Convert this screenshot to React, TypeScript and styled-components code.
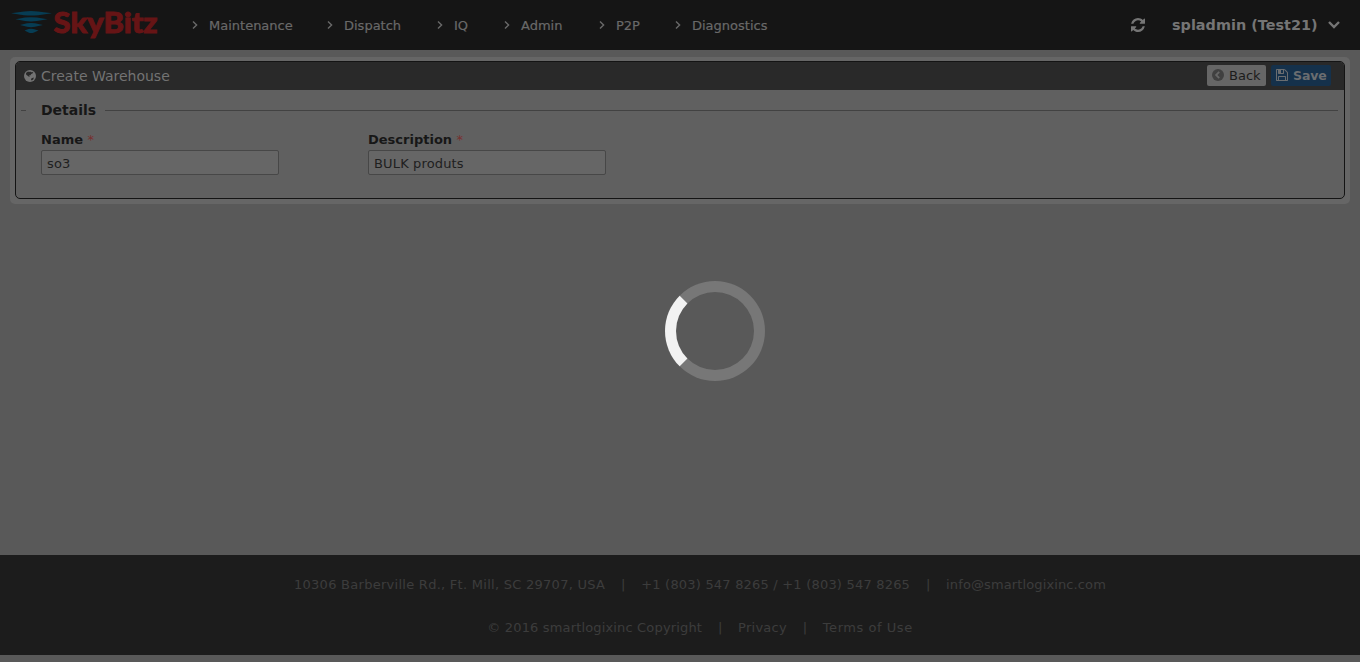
import React from "react";
import styled, { createGlobalStyle } from "styled-components";

const Global = createGlobalStyle`
  * { box-sizing: border-box; }
  body { margin: 0; background: #595959; font-family: Verdana, "DejaVu Sans", sans-serif; font-size: 13px; overflow: hidden; }
`;

const Page = styled.div`
  height: 662px;
  display: flex;
  flex-direction: column;
  background: #595959;
`;

const TopBar = styled.header`
  height: 50px;
  flex: none;
  display: flex;
  align-items: center;
  background: #151515;
  color: #696969;
`;

const LogoBox = styled.a`
  width: 192px;
  height: 50px;
  flex: none;
  svg { display: block; }
`;

const Nav = styled.nav`
  display: flex;
  flex: 1;
`;

const NavItem = styled.a<{ $w: number }>`
  width: ${(p) => p.$w}px;
  display: flex;
  align-items: center;
  height: 50px;
  gap: 11px;
  white-space: nowrap;
  -webkit-text-stroke: 0.2px #696969;
  svg { flex: none; }
`;

const NavText = styled.span`
  line-height: 16px;
  padding-top: 2px;
`;

const Tools = styled.div`
  display: flex;
  align-items: center;
  padding-right: 20px;
  color: #757575;
`;

const UserName = styled.span`
  margin: 0 10px 0 27px;
  width: 146px;
  white-space: nowrap;
  font-size: 14.4px;
  font-weight: bold;
  letter-spacing: 0.02px;
`;

const Main = styled.main`
  flex: 1;
  padding: 7px 10px;
`;

const Frame = styled.section`
  height: 147px;
  padding: 4px 5px 5px;
  border-radius: 5px;
  background: #666;
`;

const Panel = styled.div`
  height: 138px;
  border: 1px solid #141414;
  border-radius: 5px;
  background: #606060;
  overflow: hidden;
`;

const PanelHead = styled.div`
  height: 28px;
  display: flex;
  align-items: center;
  justify-content: space-between;
  padding: 0 13px 0 8px;
  background: #292929;
  color: #737373;
`;

const PanelTitle = styled.h1`
  margin: 0;
  display: flex;
  align-items: center;
  gap: 5px;
  font-size: 14px;
  font-weight: normal;
  letter-spacing: 0;
`;

const Actions = styled.div`
  display: flex;
  gap: 5px;
  padding-bottom: 2px;
`;

const Button = styled.button<{ $primary?: boolean }>`
  height: 21px;
  width: ${(p) => (p.$primary ? 60 : 59)}px;
  display: flex;
  align-items: center;
  gap: 5px;
  padding: 0 0 0 5px;
  border: 0;
  border-radius: 2px;
  font: ${(p) => (p.$primary ? "bold 12.5px" : "13px")} Verdana, "DejaVu Sans", sans-serif;
  background: ${(p) => (p.$primary ? "#15314b" : "#666")};
  color: ${(p) => (p.$primary ? "#6a6d70" : "#1c1c1c")};
  letter-spacing: ${(p) => (p.$primary ? "-0.1px" : "0")};
  svg { flex: none; }
`;

const Legend = styled.div`
  height: 40px;
  display: flex;
  align-items: center;
  padding: 0 6px 0 5px;
  color: #171717;
`;

const Rule = styled.i<{ $w?: number }>`
  height: 1px;
  ${(p) => (p.$w ? `width: ${p.$w}px;` : "flex: 1;")}
  background: #424242;
`;

const LegendText = styled.b`
  width: 64px;
  margin-left: 15px;
  font-size: 14px;
`;

const Fields = styled.div`
  display: flex;
  padding-left: 25px;
  gap: 89px;
`;

const Field = styled.label`
  width: 238px;
  display: block;
`;

const Label = styled.span`
  display: block;
  height: 20px;
  line-height: 20px;
  font-weight: bold;
  color: #171717;
  white-space: nowrap;
`;

const Required = styled.span`
  color: #792f2f;
  font-weight: normal;
`;

const Input = styled.input`
  display: block;
  width: 238px;
  height: 25px;
  padding: 2px 5px 0;
  border: 1px solid #474747;
  border-radius: 2px;
  outline: 0;
  background: #666;
  color: #202020;
  font: 13px Verdana, "DejaVu Sans", sans-serif;
  letter-spacing: 0.15px;
`;

const Footer = styled.footer`
  height: 100px;
  flex: none;
  margin-bottom: 7px;
  padding: 8px 0 0 40px;
  background: #1c1c1c;
  color: #3c3c3c;
`;

const FooterLine = styled.div`
  height: 43px;
  display: flex;
  align-items: center;
  justify-content: center;
  white-space: nowrap;
`;

const FooterText = styled.span<{ $spacing: number }>`
  letter-spacing: ${(p) => p.$spacing}px;
`;

const Bar = styled.span`
  width: 36px;
  text-align: center;
`;

const Loader = styled.div`
  position: fixed;
  top: 281px;
  left: 665px;
  width: 100px;
  height: 100px;
  border: 11px solid #777;
  border-left-color: #f2f2f2;
  border-radius: 50%;
`;

const Chevron = () => (
  <svg width="6" height="8" viewBox="0 0 6 8" fill="none" stroke="#696969" strokeWidth="1.4">
    <path d="M1 0.5 4.6 4 1 7.5" />
  </svg>
);

const Logo = () => (
  <svg width="170" height="50" viewBox="0 0 170 50">
    <g fill="#073d54">
      <path d="M11 13.2 24 11.5Q31 10.7 38 11.5L52 13.2 38 15.2Q31 16 24 15.2Z" />
      <path d="M15.5 19.2 25 17.5Q31 16.9 37 17.5L47.5 19.2 37 21Q31 21.8 25 21Z" />
      <path d="M20 24.9 27 23.2Q31 22.6 35 23.2L43 24.9 35 26.8Q31 27.5 27 26.8Z" />
      <path d="M24.5 30.4 28.5 28.9Q31 28.4 33.5 28.9L38.5 30.4 34 32.4Q31 33.6 28.5 32.4Z" />
    </g>
    <text x="53.6" y="32.7" textLength="104" lengthAdjust="spacingAndGlyphs" fontFamily="Lato, sans-serif" fontWeight="900" fontSize="29" fill="#661415" stroke="#661415" strokeWidth="0.9">SkyBitz</text>
  </svg>
);

const Refresh = () => (
  <svg width="14" height="14" viewBox="0 128 1536 1536" fill="currentColor">
    <path d="M1511 1056q0 5-1 7-64 268-268 434.5t-478 166.5q-146 0-282.5-55t-243.5-157l-129 129q-19 19-45 19t-45-19-19-45v-448q0-26 19-45t45-19h448q26 0 45 19t19 45-19 45l-137 137q71 66 161 102t187 36q134 0 250-65t186-179q11-17 53-117 8-23 30-23h192q13 0 22.5 9.5t9.5 22.5zm25-800v448q0 26-19 45t-45 19h-448q-26 0-45-19t-19-45 19-45l138-138q-148-137-349-137-134 0-250 65t-186 179q-11 17-53 117-8 23-30 23h-199q-13 0-22.5-9.5t-9.5-22.5v-7q65-268 270-434.5t480-166.5q146 0 284 55.5t245 156.5l130-129q19-19 45-19t45 19 19 45z" />
  </svg>
);

const Floppy = () => (
  <svg width="12" height="12" viewBox="128 128 1536 1536" fill="currentColor">
    <path d="M512 1536h768v-384h-768v384zm896 0h128v-896q0-14-10-38.5t-20-34.5l-281-281q-10-10-34-20t-39-10v416q0 40-28 68t-68 28h-576q-40 0-68-28t-28-68v-416h-128v1280h128v-416q0-40 28-68t68-28h832q40 0 68 28t28 68v416zm-384-928v-320q0-13-9.5-22.5t-22.5-9.5h-192q-13 0-22.5 9.5t-9.5 22.5v320q0 13 9.5 22.5t22.5 9.5h192q13 0 22.5-9.5t9.5-22.5zm640 32v928q0 40-28 68t-68 28h-1344q-40 0-68-28t-28-68v-1344q0-40 28-68t68-28h928q40 0 88 20t76 48l280 280q28 28 48 76t20 88z" />
  </svg>
);

const Globe = () => (
  <svg width="12" height="12" viewBox="0 0 12 12">
    <circle cx="6" cy="6" r="6" fill="#737373" />
    <path d="M2 3 4 1.6 5.2 2 6 1.4 7.5 2.3 9.2 2 8.5 3.5 7.2 4 6.5 5.2 5 5.6 5.8 7 4.6 6.6 3.3 5.4 2.2 4.8ZM7.6 8.2 9.8 7.5 9.4 9.2 7.8 10.5 6.9 9.5Z" fill="#292929" />
  </svg>
);

const NAV: [string, number][] = [
  ["Maintenance", 135],
  ["Dispatch", 110],
  ["IQ", 67],
  ["Admin", 95],
  ["P2P", 76],
  ["Diagnostics", 100],
];

export default function App() {
  return (
    <Page>
      <Global />
      <TopBar>
        <LogoBox><Logo /></LogoBox>
        <Nav>
          {NAV.map(([name, w]) => (
            <NavItem key={name} $w={w}><Chevron /><NavText>{name}</NavText></NavItem>
          ))}
        </Nav>
        <Tools>
          <Refresh />
          <UserName>spladmin (Test21)</UserName>
          <svg width="12" height="8" viewBox="0 0 12 8" fill="none" stroke="currentColor" strokeWidth="2.4">
            <path d="M1 1 6 6 11 1" />
          </svg>
        </Tools>
      </TopBar>
      <Main>
        <Frame>
          <Panel>
            <PanelHead>
              <PanelTitle><Globe />Create Warehouse</PanelTitle>
              <Actions>
                <Button>
                  <svg width="12" height="12" viewBox="0 0 12 12" fill="none">
                    <circle cx="6" cy="6" r="6" fill="#404040" />
                    <path d="M7.2 2.8 4.1 6 7.2 9.2" stroke="#666" strokeWidth="1.8" />
                  </svg>
                  Back
                </Button>
                <Button $primary><Floppy />Save</Button>
              </Actions>
            </PanelHead>
            <Legend>
              <Rule $w={5} />
              <LegendText>Details</LegendText>
              <Rule />
            </Legend>
            <Fields>
              <Field>
                <Label>Name <Required>*</Required></Label>
                <Input defaultValue="so3" />
              </Field>
              <Field>
                <Label>Description <Required>*</Required></Label>
                <Input defaultValue="BULK produts" />
              </Field>
            </Fields>
          </Panel>
        </Frame>
      </Main>
      <Footer>
        <FooterLine>
          <FooterText $spacing={0.27}>10306 Barberville Rd., Ft. Mill, SC 29707, USA</FooterText><Bar>|</Bar>
          <FooterText $spacing={0.2}>+1 (803) 547 8265 / +1 (803) 547 8265</FooterText><Bar>|</Bar>
          <FooterText $spacing={0.12}>info@smartlogixinc.com</FooterText>
        </FooterLine>
        <FooterLine>
          <FooterText $spacing={0.16}>© 2016 smartlogixinc Copyright</FooterText><Bar>|</Bar>
          <FooterText $spacing={0.24}>Privacy</FooterText><Bar>|</Bar>
          <FooterText $spacing={0.54}>Terms of Use</FooterText>
        </FooterLine>
      </Footer>
      <Loader />
    </Page>
  );
}
